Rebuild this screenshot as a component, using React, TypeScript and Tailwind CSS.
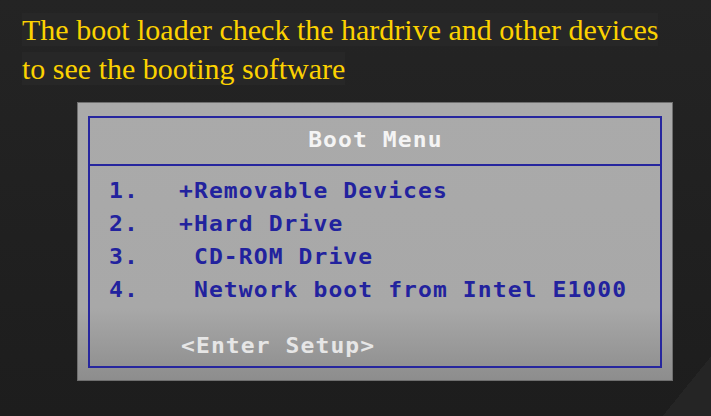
import React from "react";

const items: { n: string; label: string }[] = [
  { n: "1.", label: "+Removable Devices" },
  { n: "2.", label: "+Hard Drive" },
  { n: "3.", label: " CD-ROM Drive" },
  { n: "4.", label: " Network boot from Intel E1000" },
];

export default function App() {
  return (
    <div className="w-[711px] h-[416px] overflow-hidden bg-[#212121] bg-[image:linear-gradient(129deg,transparent_95.4%,#252525_95.4%),linear-gradient(to_bottom,#242424,#1d1d1d)] flex flex-col">
      <div
        className="pl-[22px] pt-[10px] text-[30px] leading-[39px] text-[#fcd200]"
        style={{ fontFamily: '"Liberation Serif", "Times New Roman", serif' }}
      >
        <div>
          <span className="bg-[#272727]">The boot loader check the hardrive and other devices</span>
        </div>
        <div>
          <span className="bg-[#272727]">to see the booting software</span>
        </div>
      </div>

      <div className="ml-[77px] mt-[14px] w-[596px] h-[279px] border border-[#6f6f6f] bg-[image:linear-gradient(to_bottom,#aaaaaa_0%,#a8a8a8_74%,#8d8d8d_100%)] pt-[13px] pb-[12px] px-[10px]">
        <div
          className="w-full h-full border-2 border-[#26269e] flex flex-col text-[21px] font-bold tracking-[1px]"
          style={{ fontFamily: '"DejaVu Sans Mono", "Liberation Mono", monospace' }}
        >
          <div className="h-[46px] flex items-center justify-center text-[#f4f4f4]">
            <span className="inline-block scale-x-[1.095] origin-center">Boot Menu</span>
          </div>
          <div className="h-[2px] bg-[#26269e]" />
          <div className="pt-[9px] pl-[19px] flex flex-col">
            {items.map((it) => (
              <div key={it.n} className="flex h-[33px] leading-[33px] text-[#22229e]">
                <span className="w-[70px] whitespace-pre">
                  <span className="inline-block scale-x-[1.095] origin-left">{it.n}</span>
                </span>
                <span className="inline-block whitespace-pre scale-x-[1.095] origin-left">{it.label}</span>
              </div>
            ))}
            <div className="mt-[23px] h-[33px] leading-[33px] pl-[72px] text-[#e6e6e6]">
              <span className="inline-block scale-x-[1.095] origin-left">&lt;Enter Setup&gt;</span>
            </div>
          </div>
        </div>
      </div>
    </div>
  );
}
